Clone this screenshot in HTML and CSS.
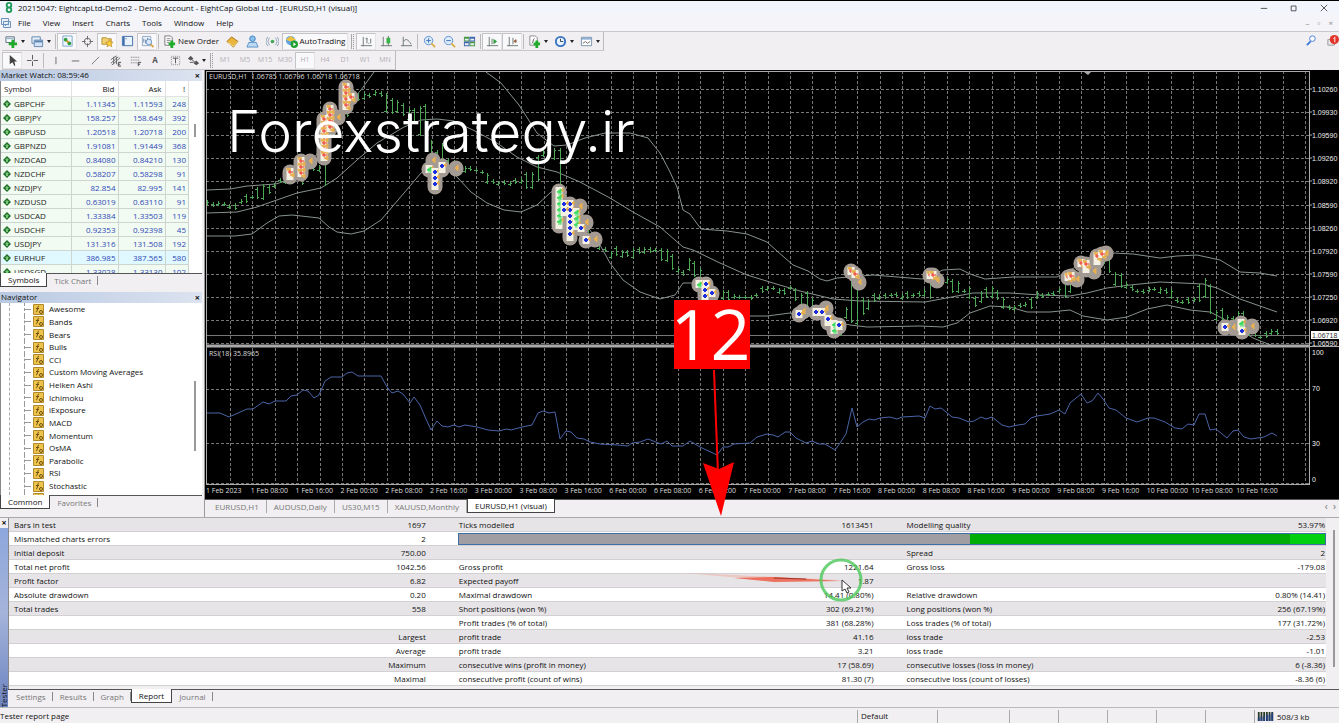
FILE: index.html
```html
<!DOCTYPE html>
<html lang="en">
<head>
  <meta charset="UTF-8" />
  <meta name="viewport" content="width=device-width, initial-scale=1.0"/>
  <title>20215047: EightcapLtd-Demo2 - Demo Account</title>
  <link rel="stylesheet" href="styles.css">
</head>
<body>

<!-- Icon definitions -->
<svg class="sprite" aria-hidden="true">
  <symbol id="i-newchart" viewBox="0 0 14 14"><path d="M1 2h9v6H1z" fill="#fff" stroke="#4d6a7c"/><path d="M2 4h7" stroke="#7ca0c0"/><path d="M7 5h3v3h3v3h-3v3H7v-3H4V8h3z" fill="#1faa2c"/></symbol>
  <symbol id="i-profiles" viewBox="0 0 14 14"><path d="M1 2h9v7H1z" fill="#e6eefb" stroke="#5f86ae"/><path d="M3.500 5.500h9v7h-9z" fill="#d3e2f6" stroke="#5f86ae"/><path d="M4 7h8" stroke="#5f86ae" stroke-width="2"/></symbol>
  <symbol id="i-market" viewBox="0 0 14 14"><path d="M2 1h10v11H2z" fill="#eef6fd" stroke="#7ea6cc"/><circle cx="5" cy="5" r="2" fill="#2f9e3c"/><circle cx="9" cy="9" r="2" fill="#2f9e3c"/><path d="M6 6l2 2" stroke="#d08a20" stroke-width="2"/></symbol>
  <symbol id="i-target" viewBox="0 0 14 14"><circle cx="7" cy="7" r="3.500" fill="none" stroke="#666"/><path d="M7 1v4M7 9v4M1 7h4M9 7h4" stroke="#666"/></symbol>
  <symbol id="i-star" viewBox="0 0 14 14"><path d="M1 3h5l1 1h4v6H1z" fill="#f0d070" stroke="#b8912c"/><path d="M9 5l1.200 2.600 2.800.2-2 2 .6 2.900L9 11.300l-2.600 1.400.6-2.900-2-2 2.800-.2z" fill="#ffcf3a" stroke="#b8862a" stroke-width=".7"/></symbol>
  <symbol id="i-terminal" viewBox="0 0 14 14"><path d="M1.500 1.500h11v10h-11z" fill="#eaf2fc" stroke="#3f6fae"/><path d="M3 2v9" stroke="#3f6fae" stroke-width="2"/><path d="M5 4h1" stroke="#345"/></symbol>
  <symbol id="i-tester" viewBox="0 0 14 14"><path d="M1.500 1.500h9v10h-9z" fill="#edf3fb" stroke="#90a7c4"/><path d="M3 8V4M5 9V5M7 8V3" stroke="#6d86a8"/><circle cx="8.500" cy="7.500" r="3" fill="#d9eafc" stroke="#6e92c0"/><path d="M10.500 10l3 3" stroke="#d9a640" stroke-width="2"/></symbol>
  <symbol id="i-order" viewBox="0 0 14 14"><path d="M2 1h6l2 2v8H2z" fill="#fff" stroke="#777"/><path d="M4 4h4M4 6h4M4 8h3" stroke="#888"/><path d="M8 6h3v2h2v3h-2v3H8v-3H6V8h2z" fill="#1faa2c"/></symbol>
  <symbol id="i-meta" viewBox="0 0 14 14"><path d="M1 7l5-5 7 5-5 6z" fill="#e9b53a" stroke="#a8741a"/><path d="M2 8l6 4 5-5" fill="none" stroke="#fbe59a"/></symbol>
  <symbol id="i-community" viewBox="0 0 14 14"><circle cx="7" cy="4" r="3" fill="#8ac0ec" stroke="#3a7fc0"/><path d="M3 8h8l2 5H1z" fill="#bcd9f4" stroke="#5c90c4"/></symbol>
  <symbol id="i-signal" viewBox="0 0 14 14"><circle cx="7" cy="7" r="2" fill="#4aa85a"/><path d="M4 3a6 6 0 0 0 0 8M10 3a6 6 0 0 1 0 8M2 2a8 8 0 0 0 0 10M12 2a8 8 0 0 1 0 10" fill="none" stroke="#8aa2b8"/></symbol>
  <symbol id="i-auto" viewBox="0 0 14 14"><circle cx="6" cy="6" r="5" fill="#5fa3e0"/><path d="M1 5l5-4 6 4-6 2z" fill="#f0c23c"/><circle cx="10" cy="10" r="4" fill="#1fa030"/><path d="M9 8l3 2-3 2z" fill="#fff"/></symbol>
  <symbol id="i-bars" viewBox="0 0 14 14"><path d="M3.500 2v10M1 11.500h12M7.500 3v6M6 4h2M9 9h1M11.500 4v5" fill="none" stroke="#6b766f"/></symbol>
  <symbol id="i-candle" viewBox="0 0 14 14"><path d="M3.500 2v10M1 11.500h12M9 1v11" stroke="#6b766f"/><path d="M7 3h4v6H7z" fill="#35b545"/></symbol>
  <symbol id="i-line" viewBox="0 0 14 14"><path d="M3.500 2v10M1 11.500h12M4 7c2-4 5-2 8 3" fill="none" stroke="#6b766f"/></symbol>
  <symbol id="i-zoomin" viewBox="0 0 14 14"><circle cx="6" cy="6" r="4.500" fill="#dcebfb" stroke="#5a8fd0"/><path d="M3.500 6h5M6 3.500v5" stroke="#3a70b8"/><path d="M9 9l4 4" stroke="#d9ae45" stroke-width="2"/></symbol>
  <symbol id="i-zoomout" viewBox="0 0 14 14"><circle cx="6" cy="6" r="4.500" fill="#dcebfb" stroke="#5a8fd0"/><path d="M3.500 6h5" stroke="#3a70b8"/><path d="M9 9l4 4" stroke="#d9ae45" stroke-width="2"/></symbol>
  <symbol id="i-tile" viewBox="0 0 14 14"><path d="M1 2h6v5H1zM7 7h6v5H7z" fill="#4a9a48"/><path d="M7 2h6v5H7zM1 7h6v5H1z" fill="#4468b0"/><path d="M2 4h4v2H2zM8 4h4v2H8zM2 9h4v2H2zM8 9h4v2H8z" fill="#e8f0f4"/></symbol>
  <symbol id="i-scroll" viewBox="0 0 14 14"><path d="M3.500 2v10M1 11.500h12M6.500 4v6" stroke="#6b766f"/><path d="M8 4l4 3-4 3z" fill="#2f9e3c"/></symbol>
  <symbol id="i-shift" viewBox="0 0 14 14"><path d="M3.500 2v10M1 11.500h12M7.500 3v7M12 6.500H9" stroke="#6b766f"/><path d="M11 4l-3 3 3 2z" fill="#a06038"/></symbol>
  <symbol id="i-indic" viewBox="0 0 14 14"><path d="M2 1h6l2 2v8H2z" fill="#fff" stroke="#888"/><path d="M4 9c2 0 1-5 3-5" stroke="#555" fill="none"/><path d="M8 6h3v2h2v3h-2v3H8v-3H6V8h2z" fill="#1faa2c"/></symbol>
  <symbol id="i-clock" viewBox="0 0 14 14"><circle cx="7" cy="7" r="5" fill="#e9f3ff" stroke="#3472c0" stroke-width="2"/><path d="M7 4v3h3" fill="none" stroke="#345"/></symbol>
  <symbol id="i-template" viewBox="0 0 14 14"><path d="M1.500 2.500h11v9h-11z" fill="#fff" stroke="#7590ac"/><path d="M2 4h10" stroke="#8db0d8" stroke-width="2"/><path d="M3 9l3-2 2 2 3-2" fill="none" stroke="#666"/></symbol>
  <symbol id="i-cursor" viewBox="0 0 14 14"><path d="M4 1v10l3-2 2 4 1-1-1-4h3z" fill="#444"/></symbol>
  <symbol id="i-cross" viewBox="0 0 14 14"><path d="M7 1v5M7 8v5M1 7h5M8 7h5" stroke="#555"/></symbol>
  <symbol id="i-vline" viewBox="0 0 14 14"><path d="M7.500 3v8" stroke="#666"/></symbol>
  <symbol id="i-hline" viewBox="0 0 14 14"><path d="M3 7.500h8" stroke="#666"/></symbol>
  <symbol id="i-trend" viewBox="0 0 14 14"><path d="M3 11l8-8" stroke="#777"/></symbol>
  <symbol id="i-channel" viewBox="0 0 14 14"><path d="M2 10l8-7M3 12l9-8M2 6l6-4M5 3v8M8 3v8" stroke="#666"/><path d="M13 9h-3v4h3M10 11h2" fill="none" stroke="#444"/></symbol>
  <symbol id="i-fibo" viewBox="0 0 14 14"><path d="M2 3.500h10M2 6.500h10M2 9.500h7" stroke="#666" stroke-dasharray="1 1"/><path d="M13 9h-3v4M10 11h2" fill="none" stroke="#444"/></symbol>
  <symbol id="i-label" viewBox="0 0 14 14"><path d="M2.500 2.500h9v9h-9z" fill="none" stroke="#888" stroke-dasharray="1 1"/><path d="M4 4.500h6M7 4v6" stroke="#555"/></symbol>
  <symbol id="i-arrows" viewBox="0 0 14 14"><path d="M4 2l3 3-3 2-3-2zM10 7l3 3-3 2-3-2z" fill="#555"/><path d="M5 6l5 4M3 9h4" stroke="#555"/></symbol>
  <symbol id="i-diamond" viewBox="0 0 8 8"><path d="M4 0l4 4-4 4-4-4z" fill="#23702c"/><path d="M4 2l2 2H5v2H3V4H2z" fill="#78c878"/></symbol>
  <symbol id="i-func" viewBox="0 0 11 11"><path d="M.5.5h10v10H.5z" fill="#edc34c" stroke="#b08a2c"/><path d="M6 2c-2 0-1 6-3 6M3 4.500h3" fill="none" stroke="#6d5010"/><circle cx="8" cy="8" r="1.500" fill="none" stroke="#6d5010"/></symbol>
</svg>

<header class="titlebar">
  <svg class="app-logo" viewBox="0 0 10 12"><path d="M5 1a2.500 2.500 0 1 0 0 5 2.500 2.500 0 1 0 0-5zM5 6a2.500 2.500 0 1 0 0 5 2.500 2.500 0 1 0 0-5z" fill="none" stroke="#1f9a58" stroke-width="2"/></svg>
  <h1>20215047: EightcapLtd-Demo2 - Demo Account - EightCap Global Ltd - [EURUSD,H1 (visual)]</h1>
  <div class="window-buttons">
    <button aria-label="Minimize"><svg viewBox="0 0 10 10"><path d="M1 5.500h8" stroke="#333"/></svg></button>
    <button aria-label="Restore"><svg viewBox="0 0 10 10"><path d="M1.500 2.500h6v6h-6z" fill="none" stroke="#333"/></svg></button>
    <button aria-label="Close"><svg viewBox="0 0 10 10"><path d="M1 1l8 8M9 1l-8 8" stroke="#333"/></svg></button>
  </div>
</header>

<nav class="menubar">
  <svg class="doc-icon" viewBox="0 0 12 12"><path d="M1.500 1.500h7v6h-7zM3.500 4.500h7v6h-7z" fill="#e8f1fb" stroke="#6d93bb"/><path d="M5 9l2-2 2 1" fill="none" stroke="#6d93bb"/></svg>
  <button>File</button>
  <button>View</button>
  <button>Insert</button>
  <button>Charts</button>
  <button>Tools</button>
  <button>Window</button>
  <button>Help</button>
  <div class="mdi-buttons">
    <button aria-label="Minimize chart">–</button>
    <button aria-label="Restore chart">▫</button>
    <button aria-label="Close chart">×</button>
  </div>
</nav>

<div class="toolbar">
  <div class="tools">
    <button class="drop" aria-label="New chart"><svg><use href="#i-newchart"/></svg></button>
    <button class="drop" aria-label="Profiles"><svg><use href="#i-profiles"/></svg></button>
    <i class="sep"></i>
    <button class="on" aria-label="Market Watch"><svg><use href="#i-market"/></svg></button>
    <button aria-label="Data Window"><svg><use href="#i-target"/></svg></button>
    <button class="on" aria-label="Navigator"><svg><use href="#i-star"/></svg></button>
    <button aria-label="Terminal"><svg><use href="#i-terminal"/></svg></button>
    <button class="on" aria-label="Strategy Tester"><svg><use href="#i-tester"/></svg></button>
    <i class="sep"></i>
    <button class="wide"><svg><use href="#i-order"/></svg>New Order</button>
    <button aria-label="MetaEditor"><svg><use href="#i-meta"/></svg></button>
    <button aria-label="Community"><svg><use href="#i-community"/></svg></button>
    <button aria-label="Signals"><svg><use href="#i-signal"/></svg></button>
    <button class="wide auto on"><svg><use href="#i-auto"/></svg>AutoTrading</button>
    <i class="grip"></i>
    <button class="on" aria-label="Bar chart"><svg><use href="#i-bars"/></svg></button>
    <button aria-label="Candlesticks"><svg><use href="#i-candle"/></svg></button>
    <button aria-label="Line chart"><svg><use href="#i-line"/></svg></button>
    <i class="sep"></i>
    <button aria-label="Zoom in"><svg><use href="#i-zoomin"/></svg></button>
    <button aria-label="Zoom out"><svg><use href="#i-zoomout"/></svg></button>
    <button aria-label="Tile windows"><svg><use href="#i-tile"/></svg></button>
    <i class="sep"></i>
    <button class="on" aria-label="Auto scroll"><svg><use href="#i-scroll"/></svg></button>
    <button class="on" aria-label="Chart shift"><svg><use href="#i-shift"/></svg></button>
    <i class="sep"></i>
    <button class="drop" aria-label="Indicators"><svg><use href="#i-indic"/></svg></button>
    <button class="drop" aria-label="Periods"><svg><use href="#i-clock"/></svg></button>
    <button class="drop" aria-label="Templates"><svg><use href="#i-template"/></svg></button>
  </div>
  <div class="alerts">
    <button aria-label="Search"><svg viewBox="0 0 14 14"><circle cx="8" cy="5" r="3" fill="#fff" stroke="#3b78d8"/><path d="M6 8l-4 4" stroke="#3b78d8" stroke-width="2"/></svg></button>
    <button aria-label="Notifications"><svg viewBox="0 0 14 14"><path d="M2 6h7v6H2z" fill="#e8e8e8" stroke="#999"/><circle cx="9" cy="6" r="5" fill="#e3342a"/><path d="M9.500 3v6M9 4l-1 1" stroke="#fff"/></svg></button>
  </div>
</div>

<div class="toolbar">
  <div class="tools">
    <button class="on" aria-label="Cursor"><svg><use href="#i-cursor"/></svg></button>
    <button aria-label="Crosshair"><svg><use href="#i-cross"/></svg></button>
    <i class="sep"></i>
    <button aria-label="Vertical line"><svg><use href="#i-vline"/></svg></button>
    <button aria-label="Horizontal line"><svg><use href="#i-hline"/></svg></button>
    <button aria-label="Trendline"><svg><use href="#i-trend"/></svg></button>
    <button aria-label="Channel"><svg><use href="#i-channel"/></svg></button>
    <button aria-label="Fibonacci"><svg><use href="#i-fibo"/></svg></button>
    <button class="letter">A</button>
    <button aria-label="Text label"><svg><use href="#i-label"/></svg></button>
    <button class="drop small" aria-label="Arrows"><svg><use href="#i-arrows"/></svg></button>
    <i class="grip"></i>
    <button class="tf">M1</button>
    <button class="tf">M5</button>
    <button class="tf">M15</button>
    <button class="tf">M30</button>
    <button class="tf on">H1</button>
    <button class="tf">H4</button>
    <button class="tf">D1</button>
    <button class="tf">W1</button>
    <button class="tf">MN</button>
  </div>
</div>

<main class="workspace">
  <aside class="sidebar">
    <section class="panel">
      <h2>Market Watch: 08:59:46 <button aria-label="Close Market Watch">×</button></h2>
      <div class="watch">
        <table>
          <thead>
            <tr><th>Symbol</th><th>Bid</th><th>Ask</th><th>!</th></tr>
          </thead>
          <tbody id="watchRows"></tbody>
        </table>
        <i class="thumb watch-thumb"></i>
      </div>
      <div class="tabs">
        <button class="active">Symbols</button>
        <button>Tick Chart</button>
      </div>
    </section>

    <section class="panel">
      <h2>Navigator <button aria-label="Close Navigator">×</button></h2>
      <div class="tree">
        <ul id="treeRows"></ul>
        <i class="thumb tree-thumb"></i>
      </div>
      <div class="tabs">
        <button class="active">Common</button>
        <button>Favorites</button>
      </div>
    </section>
  </aside>

  <section class="chart-area">
    <div class="chart">
      <svg id="plot" class="plot" viewBox="206 71 1104 414" preserveAspectRatio="none"></svg>
      <div class="ohlc">EURUSD,H1&nbsp; 1.06785 1.06796 1.06718 1.06718</div>
      <div class="rsi-label">RSI(18) 35.8965</div>
      <svg id="axis" class="axis" viewBox="1310 71 29 414"></svg>
      <div id="times" class="times"></div>
      <div class="watermark">Forexstrategy.ir</div>
    </div>
    <div class="chart-tabs">
      <button>EURUSD,H1</button>
      <button>AUDUSD,Daily</button>
      <button>US30,M15</button>
      <button>XAUUSD,Monthly</button>
      <button class="active">EURUSD,H1 (visual)</button>
      <span class="arrows">‹ &nbsp;›</span>
    </div>
  </section>
</main>

<section class="tester">
  <div class="tester-side">
    <button aria-label="Close Tester">×</button>
    <span>Tester</span>
  </div>
  <div class="tester-body">
    <div class="report">
      <table>
        <tbody>
          <tr><td>Bars in test</td><td>1697</td><td>Ticks modelled</td><td>1613451</td><td>Modelling quality</td><td>53.97%</td></tr>
          <tr><td>Mismatched charts errors</td><td>2</td><td colspan="4" class="quality"><div class="bar"><i class="none"></i><i class="good"></i><i class="best"></i></div></td></tr>
          <tr><td>Initial deposit</td><td>750.00</td><td></td><td></td><td>Spread</td><td>2</td></tr>
          <tr><td>Total net profit</td><td>1042.56</td><td>Gross profit</td><td>1221.64</td><td>Gross loss</td><td>-179.08</td></tr>
          <tr><td>Profit factor</td><td>6.82</td><td>Expected payoff</td><td>1.87</td><td></td><td></td></tr>
          <tr><td>Absolute drawdown</td><td>0.20</td><td>Maximal drawdown</td><td>14.41 (0.80%)</td><td>Relative drawdown</td><td>0.80% (14.41)</td></tr>
          <tr><td>Total trades</td><td>558</td><td>Short positions (won %)</td><td>302 (69.21%)</td><td>Long positions (won %)</td><td>256 (67.19%)</td></tr>
          <tr><td></td><td></td><td>Profit trades (% of total)</td><td>381 (68.28%)</td><td>Loss trades (% of total)</td><td>177 (31.72%)</td></tr>
          <tr><td></td><td>Largest</td><td>profit trade</td><td>41.16</td><td>loss trade</td><td>-2.53</td></tr>
          <tr><td></td><td>Average</td><td>profit trade</td><td>3.21</td><td>loss trade</td><td>-1.01</td></tr>
          <tr><td></td><td>Maximum</td><td>consecutive wins (profit in money)</td><td>17 (58.69)</td><td>consecutive losses (loss in money)</td><td>6 (-8.36)</td></tr>
          <tr><td></td><td>Maximal</td><td>consecutive profit (count of wins)</td><td>81.30 (7)</td><td>consecutive loss (count of losses)</td><td>-8.36 (6)</td></tr>
        </tbody>
      </table>
      <i class="thumb report-thumb"></i>
    </div>
    <div class="tabs">
      <button>Settings</button>
      <button>Results</button>
      <button>Graph</button>
      <button class="active">Report</button>
      <button>Journal</button>
    </div>
  </div>
</section>

<footer class="status">
  <span class="message">Tester report page</span>
  <span class="profile">Default</span>
  <span class="s72"></span>
  <span class="s49"></span>
  <span class="s49"></span>
  <span class="s49"></span>
  <span class="s49"></span>
  <span class="s49"></span>
  <span class="traffic">
    <svg viewBox="0 0 17 10"><path d="M1 0v10M4 0v10M7 0v10M10 0v10M13 0v10M16 0v10" stroke="#2a3a28" stroke-width="2"/><path d="M1 6v4M4 5v5M7 5v5M10 3v7M13 3v7M16 1v9" stroke="#24407c" stroke-width="2"/></svg>
    508/3 kb
  </span>
</footer>

<!-- Step number and pointer drawn over the window -->
<div class="step">12</div>
<svg class="step-arrow" viewBox="0 0 34 146"><path d="M13 0L17 104" stroke="#f00" stroke-width="2"/><path d="M2 93l16 6 15-7-13 54z" fill="#f00"/></svg>
<svg class="trail" viewBox="0 0 200 50">
  <path d="M20 17L70 19 179 24 90 23z" fill="#f4a898" opacity=".5"/>
  <path d="M70 22L110 21 179 25 110 26z" fill="#ee5540" opacity=".8"/>
  <path d="M110 22l32 1" stroke="#a03828"/>
  <circle cx="177" cy="24" r="20" fill="none" stroke="#4cc85a" stroke-width="3" opacity=".8"/>
  <path d="M178 24v11l3-2 2 4 2-1-2-4h4z" fill="#fff" stroke="#333" stroke-width="1"/>
</svg>

<script>
  const watch = [
    ["GBPCHF", "1.11345", "1.11593", 248], ["GBPJPY", "158.257", "158.649", 392],
    ["GBPUSD", "1.20518", "1.20718", 200], ["GBPNZD", "1.91081", "1.91449", 368],
    ["NZDCAD", "0.84080", "0.84210", 130], ["NZDCHF", "0.58207", "0.58298", 91],
    ["NZDJPY", "82.854", "82.995", 141], ["NZDUSD", "0.63019", "0.63110", 91],
    ["USDCAD", "1.33384", "1.33503", 119], ["USDCHF", "0.92353", "0.92398", 45],
    ["USDJPY", "131.316", "131.508", 192], ["EURHUF", "386.985", "387.565", 580],
    ["USDSGD", "1.33028", "1.33130", 102]
  ];
  document.getElementById("watchRows").innerHTML = watch.map(r =>
    `<tr${r[0] === "EURHUF" ? ' class="selected"' : ""}><td><svg><use href="#i-diamond"/></svg>${r[0]}</td><td>${r[1]}</td><td>${r[2]}</td><td>${r[3]}</td></tr>`
  ).join("");

  const indicators = ["Awesome", "Bands", "Bears", "Bulls", "CCI", "Custom Moving Averages", "Heiken Ashi",
    "Ichimoku", "iExposure", "MACD", "Momentum", "OsMA", "Parabolic", "RSI", "Stochastic", ""];
  document.getElementById("treeRows").innerHTML = indicators.map(n =>
    `<li><svg><use href="#i-func"/></svg>${n}</li>`
  ).join("");

  const times = ["1 Feb 2023", "1 Feb 08:00", "1 Feb 16:00", "2 Feb 00:00", "2 Feb 08:00", "2 Feb 16:00",
    "3 Feb 00:00", "3 Feb 08:00", "3 Feb 16:00", "6 Feb 00:00", "6 Feb 08:00", "6 Feb 16:00",
    "7 Feb 00:00", "7 Feb 08:00", "7 Feb 16:00", "8 Feb 00:00", "8 Feb 08:00", "8 Feb 16:00",
    "9 Feb 00:00", "9 Feb 08:00", "9 Feb 16:00", "10 Feb 00:00", "10 Feb 08:00", "10 Feb 16:00"];
  document.getElementById("times").innerHTML = times.map(t => `<span>${t}</span>`).join("");

  // Price bars: x, high, low
  const bars = [
    [207,200,206],[213,202,207],[218,201,206],[224,202,206],[229,204,209],[235,203,210],[241,199,204],[246,194,203],
    [252,195,199],[257,187,199],[263,184,200],[269,185,194],[274,183,188],[280,178,183],[285,178,184],[291,168,180],
    [296,165,178],[302,160,185],[308,160,170],[313,163,171],[319,165,172],[325,130,186],[330,110,140],[336,112,125],
    [341,110,122],[347,90,117],[352,92,105],[358,93,101],[364,92,100],[369,93,98],[375,90,96],[381,91,97],[386,93,113],
    [392,98,114],[397,100,113],[403,103,116],[409,108,121],[414,108,124],[420,106,136],[425,104,146],[431,140,156],
    [437,150,160],[442,143,172],[448,158,170],[454,160,172],[459,163,170],[465,166,173],[470,166,171],[476,168,172],
    [482,170,174],[487,173,184],[493,179,184],[498,181,186],[504,180,185],[510,181,186],[515,178,184],[521,178,184],
    [526,172,189],[532,172,189],[538,155,181],[543,150,157],[549,148,158],[554,148,160],[560,148,195],[566,195,232],
    [571,200,240],[577,210,235],[582,215,238],[588,225,242],[594,236,244],[599,240,250],[605,247,252],[611,251,259],
    [616,246,256],[622,250,258],[627,250,257],[633,248,259],[639,247,254],[644,247,254],[650,247,253],[655,248,252],
    [661,248,261],[667,249,262],[672,254,270],[678,267,273],[683,270,276],[689,258,271],[694,261,277],[700,268,287],
    [706,278,297],[711,285,300],[717,290,302],[723,290,300],[728,290,301],[734,294,299],[739,295,299],[745,295,299],
    [751,295,300],[756,293,297],[762,286,293],[767,286,291],[773,286,290],[779,288,294],[784,288,295],[790,285,290],
    [795,288,301],[801,293,312],[807,291,310],[812,298,316],[818,305,320],[823,308,322],[829,312,328],[835,318,332],
    [840,319,336],[846,307,319],[851,274,323],[857,280,325],[863,298,315],[868,299,310],[874,293,302],[879,294,300],
    [885,293,299],[891,293,297],[896,292,297],[902,294,300],[907,291,299],[913,293,297],[919,291,297],[924,289,297],
    [930,274,299],[936,276,286],[941,277,282],[947,277,284],[952,279,293],[958,281,293],[964,289,293],[969,286,299],
    [975,296,307],[981,291,303],[986,287,298],[992,286,298],[997,290,300],[1003,297,309],[1009,305,310],[1014,305,311],
    [1020,303,308],[1025,302,307],[1031,297,309],[1037,291,299],[1042,293,298],[1048,292,296],[1053,291,296],
    [1059,287,293],[1065,280,298],[1070,276,293],[1076,272,286],[1081,264,280],[1087,262,275],[1093,260,273],
    [1098,255,270],[1104,252,264],[1109,256,273],[1115,272,286],[1121,273,288],[1126,282,289],[1132,285,291],
    [1137,289,293],[1143,289,294],[1149,287,292],[1154,287,291],[1160,287,294],[1166,288,294],[1171,289,299],
    [1177,298,303],[1182,300,304],[1188,297,304],[1194,297,302],[1199,284,302],[1205,278,298],[1210,284,314],
    [1216,310,321],[1222,308,320],[1227,315,325],[1233,316,326],[1238,311,326],[1243,311,330],[1249,322,336],
    [1255,330,337],[1260,335,339],[1266,331,338],[1271,329,335],[1277,329,335]
  ];

  // Bollinger bands and RSI polylines
  const upper1 = "207,190 230,189 247,186 276,184 300,176 320,150 340,113 361,90 374,72";
  const upper2 = "486,72 501,83 519,105 537,133 554,146 567,145 585,138 605,133 630,133 648,138 660,153 669,170 677,187 683,210 690,214 701,229 727,231 747,234 767,242 777,251 793,265 808,271 820,279 827,281 837,278 873,275 922,279 943,270 960,269 970,274 985,279 1013,277 1057,277 1085,262 1113,253 1133,254 1160,258 1177,256 1197,255 1220,260 1240,272 1260,273 1277,276";
  const middle = "207,213 237,212 257,207 271,202 297,193 321,188 337,178 357,160 377,143 404,127 421,120 437,119 454,121 477,132 497,143 517,157 537,167 557,172 580,182 610,198 633,212 660,227 683,247 693,250 720,263 747,275 773,283 800,291 833,299 860,301 925,302 973,293 1010,293 1040,295 1070,296 1087,293 1107,288 1130,285 1160,282 1203,284 1217,288 1240,299 1277,312";
  const lower = "207,236 235,236 252,234 267,223 279,216 292,215 319,218 329,227 337,232 351,234 364,231 381,220 404,193 421,173 434,163 447,167 457,177 471,192 487,203 504,210 521,212 537,205 551,192 560,190 580,215 600,245 610,263 623,280 640,292 660,299 675,295 683,283 693,283 710,300 750,316 767,316 790,313 820,318 850,325 867,327 920,326 943,327 957,323 970,313 990,306 1010,307 1027,312 1050,312 1070,310 1083,316 1107,320 1127,317 1147,309 1167,305 1190,310 1210,312 1220,317 1253,338 1273,346";
  const rsi = "207,413 220,413 229,417 238,413 247,409 253,409 263,402 269,404 275,401 286,401 291,396 297,395 303,390 308,391 314,398 319,395 325,381 331,377 342,377 347,373 352,372 358,376 370,376 381,376 387,387 392,393 398,391 403,394 410,403 414,397 420,405 426,419 431,430 437,421 442,426 448,427 454,425 459,427 465,425 477,427 488,430 499,431 506,429 511,430 522,427 532,425 538,413 543,411 549,413 555,412 560,439 566,431 571,432 577,438 584,439 590,442 600,444 618,445 628,446 632,443 640,442 648,439 661,444 667,441 672,446 683,446 690,441 700,447 717,455 723,447 728,447 734,444 750,443 757,437 767,434 773,435 778,437 785,432 790,432 796,438 806,443 812,441 819,444 825,444 835,450 840,443 846,434 852,408 857,427 863,422 869,419 874,420 880,418 890,417 897,419 902,417 919,416 925,418 930,406 935,409 941,408 946,412 952,417 959,418 969,422 974,421 981,417 986,419 992,417 1002,425 1009,427 1018,425 1025,424 1031,418 1037,416 1050,414 1059,410 1065,414 1070,403 1081,394 1087,403 1092,401 1098,393 1103,399 1109,408 1116,410 1126,418 1137,422 1148,418 1154,418 1165,422 1175,428 1182,429 1188,424 1194,425 1199,414 1205,414 1210,430 1216,429 1227,438 1233,431 1238,430 1244,437 1251,439 1264,437 1272,433 1277,436";

  // Trade marks: kind (s = sell, b = buy, g = open buy, x = close), x, first y, last y
  const marks = [
    ["s",290,172,176],["s",301,161,173],["x",310,161,161],["s",324,119,157],["s",330,109,128],["x",338,117,117],
    ["s",346,87,106],["s",351,97,97],["x",433,160,160],["g",429,169,169],["b",435,172,186],["b",442,166,169],["x",456,168,168],
    ["g",559,191,225],["b",570,204,237],["b",564,204,212],["x",580,206,206],["g",576,212,226],["b",581,228,228],["x",586,222,222],
    ["b",586,240,240],["x",595,239,239],["g",699,284,284],["b",706,284,284],["b",705,290,296],["b",712,293,293],
    ["b",799,314,314],["x",803,311,311],["b",816,312,312],["b",822,312,312],["x",826,308,308],["b",828,319,322],
    ["g",834,324,330],["b",839,325,326],["s",851,271,271],["s",855,274,274],["x",859,282,282],
    ["s",930,275,275],["s",933,275,275],["x",937,280,280],["s",1068,277,277],["s",1071,276,276],["x",1077,279,279],
    ["s",1081,263,263],["s",1086,264,269],["x",1094,271,271],["s",1097,256,261],["s",1102,254,254],["x",1106,253,253],
    ["b",1225,327,327],["x",1233,327,327],["g",1241,323,327],["b",1242,331,331],["x",1252,326,326]
  ];

  let out = "";
  for (let x = 230; x < 1310; x += 22.4) {
    out += `<path class="grid" d="M${Math.round(x)} 71V344M${Math.round(x)} 348V484"/>`;
  }
  for (let i = 0; i < 12; i++) {
    const y = Math.round(89 + i * 23.1);
    out += `<path class="grid" d="M206 ${y}H1310"/>`;
  }
  out += `<path class="grid" d="M206 389H1310M206 443H1310M206 483H1310"/>`;
  out += `<path class="last" d="M206 335H1310"/>`;
  [upper1, upper2, middle, lower].forEach(p => out += `<polyline class="band" points="${p}"/>`);
  bars.forEach((b, i) => {
    const open = i % 2 ? b[1] + 2 : b[2] - 2;
    const close = i % 2 ? b[2] - 2 : b[1] + 2;
    out += `<path class="price" d="M${b[0]} ${b[1]}V${b[2]}M${b[0] - 2} ${open}h2M${b[0]} ${close}h2"/>`;
  });
  marks.forEach(m => out += `<path class="halo" d="M${m[1]} ${m[2]}V${m[3] + 1}"/>`);
  marks.forEach(m => {
    const [kind, x, top, bottom] = m;
    if (kind !== "x") out += `<path class="core" d="M${x} ${top - 4}V${bottom + 4}"/>`;
    for (let y = top; y <= bottom; y += 6) {
      if (kind === "s") out += `<path class="exit" d="M${x + 4} ${y + 1}l-4 2 4 2zM${x - 3} ${y - 4}l4 1-3 2z"/><path class="sell" d="M${x - 2} ${y}h5M${x} ${y - 2}v4"/>`;
      if (kind === "b") out += `<path class="exit" d="M${x + 4} ${y - 3}l-2 2 2 2z"/><path class="buy" d="M${x - 2} ${y}h4M${x} ${y - 2}v4"/>`;
      if (kind === "g") out += `<path class="exit" d="M${x + 4} ${y - 3}l-2 2 2 2z"/><path class="go" d="M${x - 2} ${y + 1}l4-3v4zM${x - 1} ${y + 3}h4"/>`;
      if (kind === "x") out += `<path class="exit" d="M${x + 2} ${y - 3}l-3 3 3 3z"/>`;
    }
  });
  out += `<path class="frame" d="M206 71.500H1310M206.500 71V485M206 484.500H1310M1309.500 71V485"/>`;
  out += `<path class="split" d="M206 346H1310"/>`;
  out += `<path class="shift" d="M1084 72h7l-3 3z"/>`;
  out += `<polyline class="rsi" points="${rsi}"/>`;
  document.getElementById("plot").innerHTML = out;

  let axis = `<path class="frame" d="M1310 346.500h29"/>`;
  ["1.10260", "1.09930", "1.09590", "1.09260", "1.08920", "1.08590", "1.08260", "1.07920", "1.07590", "1.07250", "1.06920", "1.06590"]
    .forEach((p, i) => {
      const y = Math.round(89 + i * 23.1);
      axis += `<path class="frame" d="M1310 ${y}h2"/><text x="1312" y="${y + 3}">${p}</text>`;
    });
  axis += `<rect x="1311" y="331" width="28" height="8" fill="#fff"/><text class="now" x="1312" y="338">1.06718</text>`;
  axis += `<text x="1312" y="355">100</text><text x="1312" y="391">70</text><text x="1312" y="446">30</text><text x="1312" y="482">0</text>`;
  document.getElementById("axis").innerHTML = axis;
</script>

</body>
</html>
```
FILE: styles.css
```css
* {
  box-sizing: border-box;
}

body {
  margin: 0;
  min-height: 100vh;
  display: flex;
  flex-direction: column;
  position: relative;
  overflow-x: hidden;
  font-family: "Open Sans", "Noto Sans", sans-serif;
  font-size: 8px;
  line-height: 12px;
  color: #111;
  background: #f1eff2;
}

button {
  margin: 0;
  padding: 0;
  border: 0;
  background: none;
  color: inherit;
  font: inherit;
  white-space: nowrap;
}

h1, h2, ul {
  margin: 0;
  padding: 0;
  font-size: inherit;
  font-weight: normal;
}

.sprite {
  position: absolute;
  width: 0;
  height: 0;
}

/* Title and menu */
.titlebar {
  display: flex;
  align-items: center;
  height: 14px;
  padding-left: 4px;
  border-top: 1px solid #000;
  background: #f3f5fc;
}

.app-logo {
  width: 10px;
  height: 11px;
  margin-right: 4px;
}

.window-buttons {
  display: flex;
  gap: 20px;
  margin-left: auto;
  padding-right: 10px;
}

.window-buttons svg {
  display: block;
  width: 10px;
  height: 8px;
}

.menubar {
  display: flex;
  align-items: center;
  gap: 12px;
  height: 18px;
  padding: 0 6px 0 0;
  background: #f5f4f9;
  border-bottom: 1px solid #c9c7cb;
}

.doc-icon {
  width: 12px;
  height: 12px;
  margin-right: -6px;
}

.mdi-buttons {
  display: flex;
  gap: 8px;
  margin-left: auto;
  color: #888;
}

/* Toolbars */
.toolbar {
  display: flex;
  justify-content: space-between;
  align-items: center;
  height: 19px;
  padding-left: 2px;
}

.tools {
  display: flex;
  align-items: center;
  height: 19px;
  border-right: 1px solid #bbb;
  border-bottom: 1px solid #c9c7cb;
}

.tools button {
  display: flex;
  align-items: center;
  justify-content: center;
  width: 20px;
  height: 17px;
}

.tools svg,
.alerts svg {
  width: 13px;
  height: 13px;
}

.tools .on {
  background: #f9f9fb;
  border: 1px solid #c4c4c8;
  border-right-color: #e4e4e6;
  border-bottom-color: #e4e4e6;
}

.tools .drop {
  width: 26px;
  gap: 3px;
}

.tools .small {
  width: 22px;
  gap: 2px;
}

.drop::after {
  content: "";
  border: 2px solid transparent;
  border-top: 3px solid #222;
  border-bottom: 0;
}

.tools .wide {
  width: 62px;
  gap: 2px;
}

.tools .auto {
  width: 66px;
}

.sep {
  width: 1px;
  height: 15px;
  margin: 0 1px;
  background: #bbb;
}

.grip {
  width: 3px;
  height: 15px;
  margin: 0 2px 0 3px;
  border-left: 1px solid #aaa;
  border-right: 1px dotted #999;
}

.tools .tf {
  color: #b2b0b4;
  font-size: 7px;
}

.letter {
  color: #555;
  font-weight: bold;
}

.alerts {
  display: flex;
  gap: 8px;
}

/* Side panels */
.workspace {
  display: flex;
  flex: 1;
}

.sidebar {
  flex: 0 0 205px;
  border-right: 1px solid #999;
}

.panel {
  width: 202px;
  margin-bottom: 4px;
}

.panel h2 {
  display: flex;
  justify-content: space-between;
  height: 11px;
  padding: 0 2px 0 1px;
  line-height: 10px;
  background: linear-gradient(90deg, #b9c9e2, #dce3f0);
}

.panel h2 button,
.tester-side button {
  font-weight: bold;
  font-size: 9px;
}

.watch,
.tree {
  position: relative;
  height: 192px;
  overflow: hidden;
  border-left: 1px solid #888;
  background: #fff;
}

.watch table {
  width: 188px;
  border-collapse: collapse;
  table-layout: fixed;
}

.watch th,
.watch td {
  height: 14px;
  padding: 0 2px;
  line-height: 13px;
  text-align: right;
  font-weight: normal;
  border-right: 1px solid #cdd5d0;
  border-bottom: 1px solid #cdd5d0;
}

.watch th {
  height: 15px;
  padding: 0 3px;
  border-color: #e2e2e2;
}

.watch td {
  color: #2f48b8;
  background: #f1fbf1;
}

.watch th:first-child,
.watch td:first-child {
  width: 70px;
  text-align: left;
  color: #222;
}

.watch th:nth-child(2),
.watch th:nth-child(3) {
  width: 47px;
}

.watch .selected td {
  background: #e0f8ff;
}

.watch td svg {
  width: 8px;
  height: 8px;
  margin: 0 3px 0 0;
  vertical-align: -1px;
}

.thumb {
  position: absolute;
  width: 2px;
  background: #999;
}

.watch-thumb {
  right: 6px;
  top: 43px;
  height: 13px;
}

.tree-thumb {
  right: 6px;
  top: 78px;
  height: 70px;
}

.tree ul {
  display: grid;
  grid-auto-rows: 1fr;
  height: 202px;
  margin-left: 8px;
  border-left: 1px dashed #aaa;
  list-style: none;
}

.tree li {
  display: flex;
  align-items: center;
  margin-left: 14px;
  border-left: 1px dashed #999;
}

.tree li::before {
  content: "";
  width: 6px;
  margin-right: 2px;
  border-top: 1px dashed #999;
}

.tree svg {
  width: 11px;
  height: 11px;
  margin-right: 5px;
}

.tabs,
.chart-tabs {
  display: flex;
  height: 15px;
  border-top: 1px solid #555;
  color: #777;
}

.tabs button {
  position: relative;
  height: 13px;
  padding: 0 7px;
}

.tabs button::after {
  content: "";
  position: absolute;
  right: 0;
  top: 2px;
  height: 9px;
  border-right: 1px solid #888;
}

.tabs .active,
.chart-tabs .active {
  margin-top: -1px;
  height: 14px;
  color: #111;
  background: #fff;
  border: 1px solid #444;
  border-top: 0;
}

.tabs .active::after {
  display: none;
}

/* Chart */
.chart-area {
  flex: 1;
  min-width: 0;
}

.chart {
  position: relative;
  display: grid;
  grid-template-columns: 1fr 29px;
  grid-template-rows: 414px 14px;
  padding: 1px 0 0 1px;
  background: #000;
  color: #ddd;
}

.plot,
.axis {
  display: block;
  width: 100%;
  height: 414px;
}

.grid {
  fill: none;
  stroke: #777;
  stroke-dasharray: 3 2;
  shape-rendering: crispEdges;
}

.last {
  stroke: #777;
  shape-rendering: crispEdges;
}

.band {
  fill: none;
  stroke: #87928c;
}

.price {
  fill: none;
  stroke: #4aa855;
  shape-rendering: crispEdges;
}

.halo {
  stroke: #a39a94;
  stroke-width: 15px;
  stroke-linecap: round;
}

.core {
  stroke: #f4f0e2;
  stroke-width: 7px;
}

.sell {
  stroke: #ee2a1c;
}

.buy {
  stroke: #1c30e0;
  stroke-width: 2px;
}

.go {
  fill: #3ddc62;
  stroke: #3ddc62;
}

.exit {
  fill: #e8b050;
  stroke: #e8b050;
}

.frame {
  fill: none;
  stroke: #aaa;
}

.split {
  stroke: #aaa;
  stroke-width: 3px;
}

.shift {
  fill: #aaa;
}

.rsi {
  fill: none;
  stroke: #4a64a8;
}

.axis text {
  font-family: "Liberation Sans", Arial, sans-serif;
  font-size: 7px;
  fill: #eee;
}

.axis .now {
  fill: #333;
}

.ohlc,
.rsi-label {
  position: absolute;
  left: 4px;
  top: 2px;
  font-size: 7px;
  line-height: 10px;
}

.rsi-label {
  top: 279px;
}

.times {
  display: flex;
  grid-column: 1 / -1;
  margin-right: 29px;
  font-size: 7px;
  line-height: 12px;
}

.times span {
  flex: 0 0 4.058%;
  min-width: 0;
  white-space: nowrap;
}

.watermark {
  position: absolute;
  left: 22px;
  top: 27px;
  font-family: Inter, sans-serif;
  font-size: 57px;
  font-weight: 300;
  line-height: 70px;
  color: #fff;
}

.chart-tabs {
  height: 16px;
  padding-left: 3px;
}

.chart-tabs button {
  height: 13px;
  padding: 0 7px;
  border-right: 1px solid #aaa;
}

.chart-tabs .arrows {
  margin-left: auto;
  padding-right: 3px;
  font-size: 10px;
}

/* Tester */
.tester {
  display: flex;
  height: 190px;
  border-top: 1px solid #aaa;
}

.tester-side {
  display: flex;
  flex-direction: column;
  justify-content: space-between;
  flex: 0 0 8px;
  background: linear-gradient(180deg, #8ba5dc, #a4b4da 50%, #6c83c0);
}

.tester-side button {
  height: 10px;
  line-height: 8px;
  background: #f1eff2;
}

.tester-side span {
  writing-mode: vertical-rl;
  transform: rotate(180deg);
  line-height: 8px;
}

.tester-body {
  flex: 1;
  min-width: 0;
}

.report {
  position: relative;
  height: 171px;
  padding-right: 13px;
  border-left: 1px solid #888;
}

.report table {
  width: 100%;
  border-collapse: separate;
  border-spacing: 0;
  table-layout: fixed;
}

.report tr:nth-child(odd) {
  background: #e6e4e7;
}

.report tr:nth-child(even) {
  background: #fff;
}

.report td {
  width: 17%;
  height: 14px;
  padding: 0 31px 0 2px;
  line-height: 12px;
  border-bottom: 1px solid #d2d0d3;
  white-space: nowrap;
}

.report td:first-child {
  padding-left: 5px;
}

.report td:nth-child(5),
.report td:nth-child(6) {
  width: 16%;
  padding-right: 1px;
}

.report td:nth-child(even) {
  text-align: right;
}

.report td.quality {
  padding: 0 0 0 1px;
}

.bar {
  display: flex;
  height: 12px;
  border: 1px solid #3d6ea5;
}

.bar .none {
  flex: 59;
  background: #a19ea3;
}

.bar .good {
  flex: 37;
  background: #00ad06;
}

.bar .best {
  flex: 4;
  background: #00d010;
}

.report-thumb {
  right: 4px;
  top: 12px;
  height: 137px;
}

.tester .tabs {
  height: 17px;
  padding-left: 1px;
}

/* Status bar */
.status {
  display: flex;
  height: 16px;
  padding-top: 2px;
  border-top: 1px solid #bbb;
}

.status span {
  border-left: 1px solid #aaa;
}

.status .message {
  flex: 1;
  border: 0;
}

.profile {
  width: 80px;
  padding-left: 3px;
}

.s72 {
  width: 72px;
}

.s49 {
  width: 49px;
}

.traffic {
  display: flex;
  align-items: center;
  gap: 3px;
  width: 85px;
  padding-left: 2px;
}

.traffic svg {
  width: 17px;
  height: 9px;
}

/* Overlays */
.step {
  position: absolute;
  left: 674px;
  top: 300px;
  display: flex;
  justify-content: center;
  width: 76px;
  height: 69px;
  padding-right: 3px;
  font-family: "Open Sans", sans-serif;
  font-size: 70px;
  font-weight: 500;
  line-height: 66px;
  color: #fff;
  background: #f00;
}

.step-arrow {
  position: absolute;
  left: 701px;
  top: 370px;
  width: 34px;
  height: 146px;
}

.trail {
  position: absolute;
  left: 664px;
  top: 556px;
  width: 200px;
  height: 50px;
}
```
